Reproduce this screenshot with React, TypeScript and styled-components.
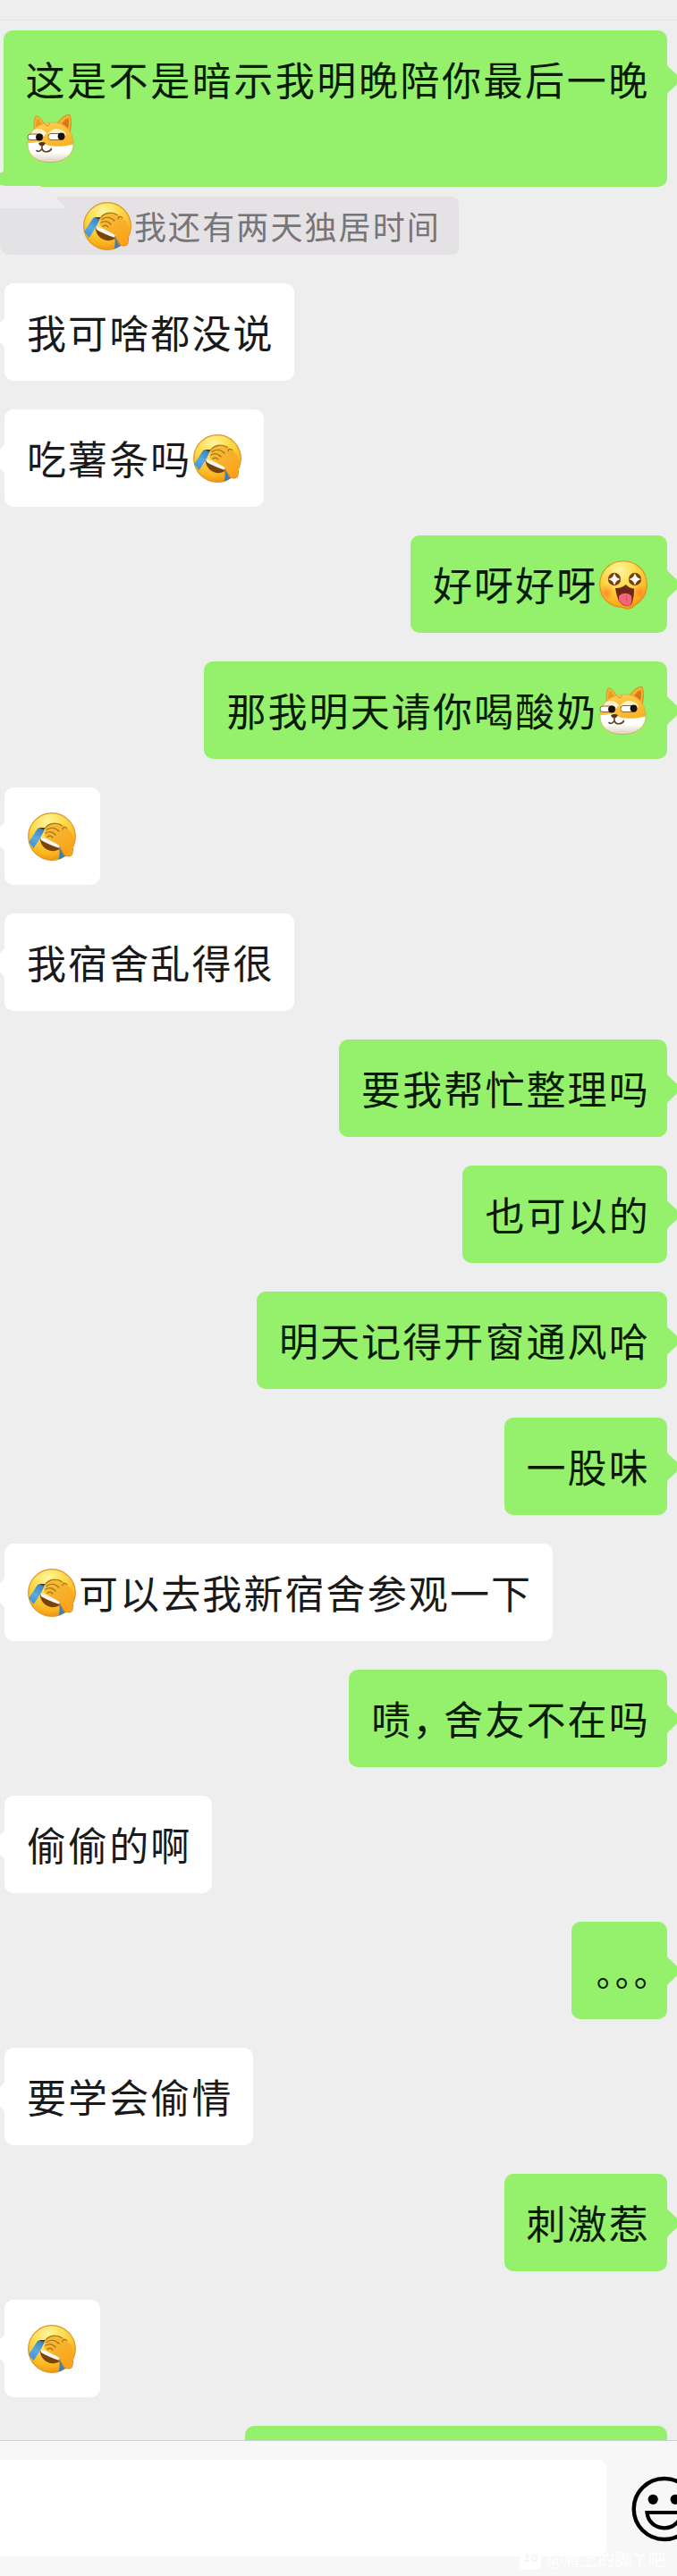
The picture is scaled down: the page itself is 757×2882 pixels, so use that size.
import React from "react";
import styled, { createGlobalStyle, css } from "styled-components";

const GlobalStyle = createGlobalStyle`
  * { box-sizing: border-box; }
  html, body { margin: 0; padding: 0; }
  body { background: #eeeeee; font-family: "Noto Sans CJK SC", "Noto Sans", sans-serif; overflow: hidden; }
`;

const Screen = styled.div`
  display: flex;
  flex-direction: column;
  width: 757px;
  height: 2882px;
  overflow: hidden;
  background: #eeeeee;
`;

const TopEdge = styled.header`
  flex: none;
  height: 23px;
  border-bottom: 1px solid #e4e4e5;
`;

const Thread = styled.main`
  flex: none;
  height: 2707px;
  padding-top: 11px;
  overflow: hidden;
`;

const MessageList = styled.div`
  display: flex;
  flex-direction: column;
  gap: 32px;
  padding: 32px 11px 0 4.5px;
`;

const bubbleBase = css`
  position: relative;
  display: flex;
  align-items: center;
  font-size: 44px;
  letter-spacing: 2.1px;
  white-space: nowrap;
  border-radius: 10px;
`;

const Bubble = styled.div<{ $mine: boolean }>`
  ${bubbleBase}
  height: 109px;
  align-self: ${(p) => (p.$mine ? "flex-end" : "flex-start")};
  padding: ${(p) => (p.$mine ? "0 19.2px 0 25px" : "0 22.5px 0 25.5px")};
  background: ${(p) => (p.$mine ? "#95f06c" : "#ffffff")};
  color: ${(p) => (p.$mine ? "#061c02" : "#1a1a1a")};
`;

const FirstBubble = styled.div`
  ${bubbleBase}
  flex-direction: column;
  align-items: flex-start;
  height: 175px;
  margin: 0 11px 0 3.5px;
  padding: 22px 0 0 25px;
  line-height: 66px;
  letter-spacing: 2.55px;
  border-bottom-left-radius: 0;
  background: #95f06c;
  color: #061c02;
`;

const EmojiLine = styled.div`
  display: flex;
  margin-top: 6px;
`;

const BubbleSmear = styled.svg`
  position: absolute;
  left: -4px;
  bottom: 0;
  display: block;
`;

const TailShape = styled.svg<{ $mine: boolean }>`
  position: absolute;
  top: 37px;
  ${(p) => (p.$mine ? "right: -17.5px;" : "left: -17.5px; transform: scaleX(-1);")}
`;

const EmojiBox = styled.span<{ $mine?: boolean; $last?: boolean }>`
  display: block;
  flex: none;
  width: 54px;
  height: 54px;
  margin-left: 1px;
  margin-right: ${(p) => (p.$last ? (p.$mine ? 3 : 4.5) : 3)}px;
  svg { display: block; }
`;

const Words = styled.span`
  line-height: 66px;
  position: relative;
  top: -1px;
  & + ${EmojiBox} { margin-left: 1.8px; margin-right: 2.7px; }
`;

const Comma = styled.span`
  letter-spacing: -9px;
`;

const Stops = styled.span`
  display: block;
  padding-top: 5px;
  margin: 0 -3px 0 2.4px;
  font-size: 38px;
  font-feature-settings: "halt" 1;
  letter-spacing: 2px;
`;

const Quote = styled.div`
  display: flex;
  align-items: center;
  position: relative;
  width: 513px;
  height: 65px;
  margin-top: 11px;
  padding-left: 92px;
  border-radius: 0 8px 8px 10px;
  background: linear-gradient(90deg, #e3e2e4 0 64px, #e5e2e5 80px);
  color: #777577;
  font-size: 36px;
  letter-spacing: 2.1px;
  white-space: nowrap;
`;

const QuoteText = styled.span`
  position: relative;
  top: -1px;
`;

const QuoteSmear = styled.svg`
  position: absolute;
  left: 0;
  top: -12px;
`;

const Composer = styled.footer`
  flex: none;
  position: relative;
  display: flex;
  align-items: flex-start;
  height: 152px;
  padding-top: 21px;
  border-top: 1px solid #cfcfcf;
  background: #f7f7f7;
`;

const Input = styled.div`
  flex: none;
  width: 678px;
  height: 108px;
  border-radius: 0 9px 9px 0;
  background: #ffffff;
`;

const FaceButton = styled.svg`
  flex: none;
  margin: 17px 0 0 26px;
`;

const Watermark = styled.div`
  position: absolute;
  left: 581px;
  top: 117px;
  display: flex;
  align-items: center;
  gap: 7px;
  height: 30px;
  color: #ffffff;
  font-size: 19px;
  line-height: 30px;
  white-space: nowrap;
`;

const DefsHolder = styled.svg`
  position: absolute;
`;

function Defs() {
  return (
    <DefsHolder width="0" height="0">
      <defs>
        <radialGradient id="skin" cx="0.42" cy="0.2" r="0.85">
          <stop offset="0" stopColor="#fff6a0" />
          <stop offset="0.4" stopColor="#fddc4c" />
          <stop offset="0.8" stopColor="#fbb21c" />
          <stop offset="1" stopColor="#e98a12" />
        </radialGradient>
        <linearGradient id="hand" x1="0" y1="0" x2="0.6" y2="1">
          <stop offset="0" stopColor="#f3c040" />
          <stop offset="1" stopColor="#fba31a" />
        </linearGradient>
        <linearGradient id="tear" x1="0.6" y1="0" x2="0.2" y2="1">
          <stop offset="0" stopColor="#3f86c2" />
          <stop offset="0.5" stopColor="#5aaae2" />
          <stop offset="1" stopColor="#3f8fd0" />
        </linearGradient>
        <linearGradient id="fur" x1="0" y1="0" x2="0.3" y2="1">
          <stop offset="0" stopColor="#ffe08a" />
          <stop offset="0.4" stopColor="#fdc63e" />
          <stop offset="1" stopColor="#f9a91c" />
        </linearGradient>
        <linearGradient id="muzzle" x1="0" y1="0" x2="0" y2="1">
          <stop offset="0.5" stopColor="#ffffff" />
          <stop offset="1" stopColor="#dccdb8" />
        </linearGradient>
        <radialGradient id="blush">
          <stop offset="0" stopColor="#ff7a2a" stopOpacity="0.75" />
          <stop offset="1" stopColor="#ff8a2a" stopOpacity="0" />
        </radialGradient>
        <clipPath id="disc"><circle cx="27" cy="27" r="26.6" /></clipPath>
        <clipPath id="head"><path d="M27 9C40 8 52 17 52 33C52 46 41 53.500 26 53.500C11 53.500 1 46 1 33C1 18 13 10 27 9Z" /></clipPath>
      </defs>
    </DefsHolder>
  );
}

function Facepalm() {
  return (
    <svg width="54" height="54" viewBox="0 0 54 54">
      <circle cx="27" cy="27" r="26.3" fill="url(#skin)" stroke="#dc9626" strokeWidth="1.2" />
      <g clipPath="url(#disc)">
        <path d="M13.500 28C22 30 30 33 37.500 38.500C35 43 29 44 24 42.500C18 40.500 14 35 13.500 28Z" fill="#7a430a" />
        <path d="M14 27.500C22 29.500 30 33 37 38L35 39.800C27 37 20 34 15 31Z" fill="#fff8ee" />
        <path d="M11.500 17.500L19 18.500C17 24 12 32 6.500 40L1 33C5 28 8 22 11.500 17.500Z" fill="url(#tear)" />
        <path d="M35 39L43 47L41 54H34C36 49 36 44 35 39Z" fill="#397fb8" />
      </g>
      <path d="M12 17L21 17L18 19.500Z" fill="#4b3b26" />
      <path d="M20 17C23 12 30 10 37 13C40 14 42 16 43.500 18.500C48 20 51 25 51.500 31C52 36 49 41 50 45C49.500 48.500 45 49.500 41.500 48C39 44 38 39.500 34.500 36C30 33 24 31 20.500 28C18 26 18 23 19 21C18 19.500 18.500 18 20 17Z" fill="url(#hand)" />
      <path d="M50.500 40C50.500 43 50.500 46 49 47.800C46 49.500 43 49 40.500 47.500C38.500 44 37.500 41 35.500 38" fill="none" stroke="#e98c16" strokeWidth="1.100" />
      <path d="M20 17C24 11.500 33 11 38 14.500M21 19.500C26 16 31 17 35 21M20 23C24 20.500 28 21.500 31 25M22 27.500C24 25.500 26 26 28 28M39 19C39 16.500 42 15 44 18" fill="none" stroke="#a9730f" strokeWidth="1.200" strokeLinecap="round" />
    </svg>
  );
}

function Doge() {
  return (
    <svg width="54" height="54" viewBox="0 0 54 54">
      <path d="M8 19C8 11 8.500 4 10 1.500C14 2 18 7 20 12Z" fill="#f9b42c" stroke="#d99829" strokeWidth="1" />
      <path d="M34 10C38 4 44 0 48 0.500C50 6 49.500 14 48 21Z" fill="#f9b42c" stroke="#c98820" strokeWidth="1" />
      <path d="M39 10C42 6 45 4 46.500 4C47.500 8 47 13 46 16Z" fill="#d5791a" />
      <path d="M10 14C10 9 10.500 7 12 5C14 6 16 9 17 11Z" fill="#e99c25" />
      <g clipPath="url(#head)">
        <rect width="54" height="54" fill="url(#fur)" />
        <path d="M3 23C7 14 18 15 22 21L17 27H2ZM24 22C27 15 39 14 44 22L40 27H24Z" fill="#fff0cc" />
        <path d="M0 31C6 34 13 29 18 31C24 37 38 37 54 33V54H0Z" fill="url(#muzzle)" />
      </g>
      <path d="M27 9C40 8 52 17 52 33C52 46 41 53.500 26 53.500C11 53.500 1 46 1 33C1 18 13 10 27 9Z" fill="none" stroke="#d99d48" strokeOpacity="0.65" strokeWidth="1" />
      <rect x="1" y="22" width="17" height="6.500" rx="3" fill="#fff" stroke="#85653d" strokeWidth="1" />
      <rect x="24" y="21.500" width="18" height="7" rx="3" fill="#fff" stroke="#85653d" strokeWidth="1" />
      <circle cx="14" cy="25.500" r="3.900" fill="#17110c" /><circle cx="38.500" cy="24.500" r="3.900" fill="#17110c" />
      <path d="M13 32C15 30.500 19 30.500 21 32C20 34.500 18 35.500 16.500 35.500C15 35.500 13.500 34 13 32Z" fill="#5d351c" />
      <path d="M17 35.500V38M11 40.500C13 42 16 41 17 38C18 43 25 43 27.500 38.500" fill="none" stroke="#65401f" strokeWidth="1.600" strokeLinecap="round" />
      <path d="M20 11L23 13L26 10" fill="none" stroke="#bd8424" strokeWidth="0.900" />
    </svg>
  );
}

function Star({ x }: { x: number }) {
  return (
    <g transform={`translate(${x} 21)`}>
      <circle r="7.200" fill="#7a3d10" />
      <path d="M0 -7C1.500 -2.500 2.500 -1.500 7 0C2.500 1.500 1.500 2.500 0 7C-1.500 2.500 -2.500 1.500 -7 0C-2.500 -1.500 -1.500 -2.500 0 -7Z" fill="#fffaf0" />
    </g>
  );
}

function Starstruck() {
  return (
    <svg width="54" height="55" viewBox="0 0 54 55">
      <path d="M27 0.700C42 0.700 53.300 12 53.300 27C53.300 38 47 46 40 50C37 54.500 31 55.500 26 52.500C11 52 0.700 41 0.700 27C0.700 12 12 0.700 27 0.700Z" fill="url(#skin)" stroke="#dc8f24" strokeWidth="1.100" />
      <circle cx="8" cy="36" r="9" fill="url(#blush)" />
      <circle cx="45" cy="36" r="9" fill="url(#blush)" />
      <Star x={17} />
      <Star x={40} />
      <path d="M18 31C22 31.500 26 30 30 27C33 30.500 36 31.500 39 31.500C39 39 38 47 35 50C30 53 23 49 21 43C19.500 39 18.500 35 18 31Z" fill="#6d2813" />
      <path d="M22 40C26 35.500 33 36 36 40C37 44 36 48 34.500 50C30 52 24 49 22 44Z" fill="#f4657d" />
      <path d="M30 39L31 46" stroke="#d84863" strokeWidth="1" />
    </svg>
  );
}

function Tail({ mine }: { mine: boolean }) {
  return (
    <TailShape $mine={mine} width="18" height="36" viewBox="0 0 18 36">
      <path d="M0 0C0 2.500 1 3.500 3 5.300L14 15.500Q17 18 14 20.500L3 30.700C1 32.500 0 33.500 0 36Z" fill={mine ? "#95f06c" : "#ffffff"} />
    </TailShape>
  );
}

type Face = "palm" | "doge" | "star";
const faces: Record<Face, () => React.JSX.Element> = { palm: Facepalm, doge: Doge, star: Starstruck };

interface Message {
  mine?: boolean;
  before?: Face;
  text?: React.ReactNode;
  after?: Face;
}

const messages: Message[] = [
  { text: "我可啥都没说" },
  { text: "吃薯条吗", after: "palm" },
  { mine: true, text: "好呀好呀", after: "star" },
  { mine: true, text: "那我明天请你喝酸奶", after: "doge" },
  { after: "palm" },
  { text: "我宿舍乱得很" },
  { mine: true, text: "要我帮忙整理吗" },
  { mine: true, text: "也可以的" },
  { mine: true, text: "明天记得开窗通风哈" },
  { mine: true, text: "一股味" },
  { before: "palm", text: "可以去我新宿舍参观一下" },
  { mine: true, text: <>啧<Comma>，</Comma>舍友不在吗</> },
  { text: "偷偷的啊" },
  { mine: true, text: <Stops>。。。</Stops> },
  { text: "要学会偷情" },
  { mine: true, text: "刺激惹" },
  { after: "palm" },
];

function Emoji({ face, mine, last }: { face: Face; mine?: boolean; last?: boolean }) {
  const Drawing = faces[face];
  return <EmojiBox $mine={mine} $last={last}><Drawing /></EmojiBox>;
}

const ClippedBubble = styled(Bubble)`
  width: 472px;
`;

export default function App() {
  return (
    <Screen>
      <GlobalStyle />
      <Defs />
      <TopEdge />
      <Thread>
        <FirstBubble>
          <BubbleSmear width="30" height="24" viewBox="0 0 30 24">
            <path d="M0 8Q3 9 4 5H30V24Q14 22 0 22Z" fill="#95f06c" />
          </BubbleSmear>
          <Words>这是不是暗示我明晚陪你最后一晚</Words>
          <EmojiLine><Emoji face="doge" /></EmojiLine>
          <Tail mine />
        </FirstBubble>
        <Quote>
          <QuoteSmear width="76" height="26" viewBox="0 0 76 26">
            <path d="M0 0H45L62 12L74 25H0Z" fill="#efecef" />
          </QuoteSmear>
          <Emoji face="palm" />
          <QuoteText>我还有两天独居时间</QuoteText>
        </Quote>
        <MessageList>
          {messages.map((m, i) => (
            <Bubble key={i} $mine={!!m.mine}>
              {m.before && <Emoji face={m.before} mine={m.mine} />}
              {m.text && <Words>{m.text}</Words>}
              {m.after && <Emoji face={m.after} mine={m.mine} last />}
              <Tail mine={!!m.mine} />
            </Bubble>
          ))}
          <ClippedBubble $mine />
        </MessageList>
      </Thread>
      <Composer>
        <Input />
        <FaceButton width="76" height="76" viewBox="0 0 76 76">
          <circle cx="38.700" cy="38" r="34" fill="none" stroke="#000" strokeWidth="4.400" />
          <circle cx="26.200" cy="27.300" r="5.600" fill="#000" />
          <circle cx="51.200" cy="27.300" r="5.600" fill="#000" />
          <path d="M19.500 42H57.900C57 52 49 59.300 38.700 59.300C28.400 59.300 20.400 52 19.500 42Z" fill="none" stroke="#000" strokeWidth="4.200" />
        </FaceButton>
        <Watermark>
          <svg width="24" height="23" viewBox="0 0 24 23">
            <rect width="24" height="23" rx="5" fill="#fff" />
            <path d="M6 8H11M8.500 5V13M5 13H11M14 7H19V13H14Z" fill="none" stroke="#f3f3f3" strokeWidth="1.500" />
          </svg>
          <span>@肩上的脚丫吧</span>
        </Watermark>
      </Composer>
    </Screen>
  );
}
